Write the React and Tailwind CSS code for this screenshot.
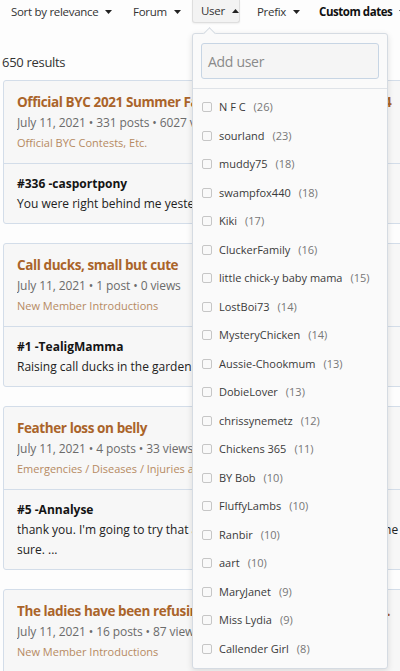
import { useState } from "react";

const USERS = [
  ["N F C", 26],
  ["sourland", 23],
  ["muddy75", 18],
  ["swampfox440", 18],
  ["Kiki", 17],
  ["CluckerFamily", 16],
  ["little chick-y baby mama", 15],
  ["LostBoi73", 14],
  ["MysteryChicken", 14],
  ["Aussie-Chookmum", 13],
  ["DobieLover", 13],
  ["chrissynemetz", 12],
  ["Chickens 365", 11],
  ["BY Bob", 10],
  ["FluffyLambs", 10],
  ["Ranbir", 10],
  ["aart", 10],
  ["MaryJanet", 9],
  ["Miss Lydia", 9],
  ["Callender Girl", 8],
];

const RESULTS = [
  {
    title: "Official BYC 2021 Summer Fair: Photo Contests - Weeks 1 - 4",
    meta: "July 11, 2021 • 331 posts • 6027 views",
    forum: "Official BYC Contests, Etc.",
    post: "#336",
    author: "casportpony",
    lines: ["You were right behind me yesterday, good luck!"],
  },
  {
    title: "Call ducks, small but cute",
    meta: "July 11, 2021 • 1 post • 0 views",
    forum: "New Member Introductions",
    post: "#1",
    author: "TealigMamma",
    lines: ["Raising call ducks in the garden. Any tips?"],
  },
  {
    title: "Feather loss on belly",
    meta: "July 11, 2021 • 4 posts • 33 views",
    forum: "Emergencies / Diseases / Injuries and Cures",
    post: "#5",
    author: "Annalyse",
    lines: ["thank you. I'm going to try that and see if it helps. I'm not sure of the", "sure. ..."],
  },
  {
    title: "The ladies have been refusing to go back in the coop at night",
    meta: "July 11, 2021 • 16 posts • 87 views",
    forum: "New Member Introductions",
    post: "#2",
    author: "",
    lines: [],
  },
];

function Caret({ up }) {
  return (
    <svg width="7" height="4" viewBox="0 0 7 4" className="ml-[7px] shrink-0">
      {up ? <path d="M0 4 L3.5 0 L7 4 Z" fill="#222" /> : <path d="M0 0 L7 0 L3.5 4 Z" fill="#222" />}
    </svg>
  );
}

function ResultCard({ r }) {
  return (
    <div className="mr-[-14px] rounded-[3px] border border-[#d3dde9] bg-[#f7f7f7]">
      <div className="px-[13px] pt-[11px] pb-[10px] border-b border-[#d3dde9]">
        <div className="truncate text-[13.5px] tracking-[-0.4px] leading-[20px] font-bold text-[#aa642a]">{r.title}</div>
        <div className="truncate text-[12px] tracking-[-0.1px] leading-[20px] text-[#6b6b6b] mt-[1px]">{r.meta}</div>
        <div className="truncate text-[11px] leading-[20px] text-[#b68a62]">{r.forum}</div>
      </div>
      {r.author && (
        <div className="px-[13px] pt-[10px] pb-[9px]">
          <div className="text-[12px] leading-[20px] font-bold text-[#141414]">
            {r.post} -{r.author}
          </div>
          {r.lines.map((l) => (
            <div key={l} className="whitespace-nowrap text-[12px] leading-[20px] text-[#222]">
              {l}
            </div>
          ))}
        </div>
      )}
    </div>
  );
}

export default function App() {
  const [checked, setChecked] = useState({});

  return (
    <div
      className="relative w-[400px] h-[671px] overflow-hidden bg-[#fdfdfd] text-[#333]"
      style={{ fontFamily: "'Open Sans', 'Noto Sans', sans-serif" }}
    >
      {/* filter bar */}
      <div className="flex items-start h-[24px] text-[11.5px] tracking-[-0.3px] whitespace-nowrap">
        <div className="flex shrink-0 items-center h-[23px] w-[122px] pl-[11px]">
          Sort by relevance
          <Caret />
        </div>
        <div className="flex shrink-0 items-center h-[23px] w-[70px] pl-[11px]">
          Forum
          <Caret />
        </div>
        <div className="flex shrink-0 items-center h-[23px] w-[48px] pl-[8px] bg-[#f3f3f3] border border-t-0 border-[#dedede] rounded-b-[3px] shadow-[0_1px_2px_rgba(0,0,0,0.06)]">
          User
          <Caret up />
        </div>
        <div className="flex shrink-0 items-center h-[23px] w-[79px] pl-[17px]">
          Prefix
          <Caret />
        </div>
        <div className="flex shrink-0 items-center h-[23px] font-bold tracking-[-0.45px] text-[#111]">
          Custom dates
          <Caret />
        </div>
      </div>

      <div className="mt-[26px] pl-[2px] text-[13px] tracking-[-0.3px] leading-[24px] text-[#333]">650 results</div>

      <div className="mt-[6px] px-[3px] flex flex-col gap-[19px]">
        {RESULTS.map((r) => (
          <ResultCard key={r.title} r={r} />
        ))}
      </div>

      {/* user dropdown */}
      <div className="absolute left-[192px] top-[33px] w-[196px] h-[636px] rounded-[3px] border border-[#d5dbe2] bg-[#fafafa] shadow-[0_2px_6px_rgba(0,0,0,0.12)]">
        <div className="absolute left-[12px] top-[-5px] w-[9px] h-[9px] rotate-45 bg-[#fafafa] border-l border-t border-[#d5dbe2]" />
        <div className="px-[8px] pt-[9px] pb-[9px] border-b border-[#dfe3e8]">
          <div className="h-[36px] rounded-[3px] border border-[#c7d5e4] bg-[#f5f5f5] flex items-center px-[6px] text-[14px] tracking-[-0.3px] text-[#8a8a8a]">
            Add user
          </div>
        </div>
        <div className="pt-[4px]">
          {USERS.map(([name, count]) => (
            <label key={name} className="flex items-center h-[28.5px] pl-[9px] text-[11px] whitespace-nowrap cursor-pointer">
              <input
                type="checkbox"
                className="appearance-none w-[10px] h-[10px] rounded-[2px] border border-[#c6c6c6] bg-[#f9f9f9] mr-[7px]"
                checked={!!checked[name]}
                onChange={() => setChecked((c) => ({ ...c, [name]: !c[name] }))}
              />
              <span className="text-[#3a3a3a]">{name}</span>
              <span className="ml-[8px] text-[#777]">({count})</span>
            </label>
          ))}
        </div>
      </div>
    </div>
  );
}
